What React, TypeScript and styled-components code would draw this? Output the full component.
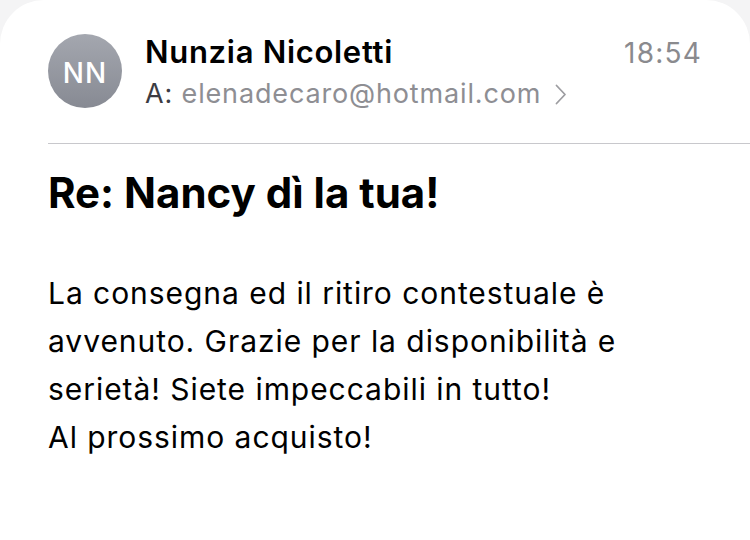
import React from "react";
import styled, {createGlobalStyle} from "styled-components";

const GlobalStyle = createGlobalStyle`
    html, body {
        margin: 0;
        padding: 0;
        background: #f4f4f5;
    }
    body {
        font-family: Inter, "Noto Sans", "Liberation Sans", sans-serif;
        -webkit-font-smoothing: antialiased;
    }
`;

const Sheet = styled.div`
    width: 750px;
    height: 540px;
    box-sizing: border-box;
    background: #fff;
    border-radius: 44px 44px 0 0;
    overflow: hidden;
    padding: 34px 0 0 48px;
`;

const Header = styled.div`
    display: flex;
    align-items: flex-start;
    gap: 23px;
    padding-right: 48px;
    height: 109px;
    border-bottom: 1px solid #c8c8cc;
`;

const Avatar = styled.div`
    width: 74px;
    height: 74px;
    flex: 0 0 auto;
    box-sizing: border-box;
    padding-top: 3px;
    border-radius: 50%;
    background: linear-gradient(180deg, #a4a7af 0%, #878a93 100%);
    color: #fff;
    display: flex;
    align-items: center;
    justify-content: center;
    font-size: 28px;
    font-weight: 500;
    letter-spacing: 1px;
`;

const Meta = styled.div`
    flex: 1;
    display: flex;
    flex-direction: column;
`;

const TopLine = styled.div`
    display: flex;
    justify-content: space-between;
    align-items: baseline;
`;

const Sender = styled.div`
    font-size: 31px;
    font-weight: 600;
    color: #000;
    line-height: 36px;
    letter-spacing: 0.7px;
`;

const Time = styled.div`
    font-size: 28px;
    color: #8a8a8e;
    letter-spacing: 1.2px;
`;

const Recipient = styled.div`
    margin-top: 6px;
    display: flex;
    align-items: center;
    gap: 14px;
    font-size: 27px;
    line-height: 36px;
    letter-spacing: 0.85px;
    color: #8e8e93;

    b {
        font-weight: 400;
        color: #3c3c43;
    }
`;

const Chevron = styled.svg`
    flex: 0 0 auto;
`;

const Subject = styled.h1`
    margin: 24px 0 0;
    font-size: 42px;
    font-weight: 700;
    color: #000;
    line-height: 50px;
`;

const Body = styled.p`
    margin: 51px 0 0;
    font-size: 30px;
    line-height: 48px;
    letter-spacing: 0.95px;
    color: #000;
`;

export default function App() {
    return <>
        <GlobalStyle/>
        <Sheet>
            <Header>
                <Avatar>NN</Avatar>
                <Meta>
                    <TopLine>
                        <Sender>Nunzia Nicoletti</Sender>
                        <Time>18:54</Time>
                    </TopLine>
                    <Recipient>
                        <span><b>A:</b> elenadecaro@hotmail.com</span>
                        <Chevron width="12" height="21" viewBox="0 0 12 21">
                            <path d="M1.5 1.5 L10 10.5 L1.5 19.5" fill="none" stroke="#9d9da1" strokeWidth="1.8"
                                  strokeLinecap="round" strokeLinejoin="round"/>
                        </Chevron>
                    </Recipient>
                </Meta>
            </Header>
            <Subject>Re: Nancy dì la tua!</Subject>
            <Body>
                La consegna ed il ritiro contestuale è<br/>
                avvenuto. Grazie per la disponibilità e<br/>
                serietà! Siete impeccabili in tutto!<br/>
                Al prossimo acquisto!
            </Body>
        </Sheet>
    </>;
}
